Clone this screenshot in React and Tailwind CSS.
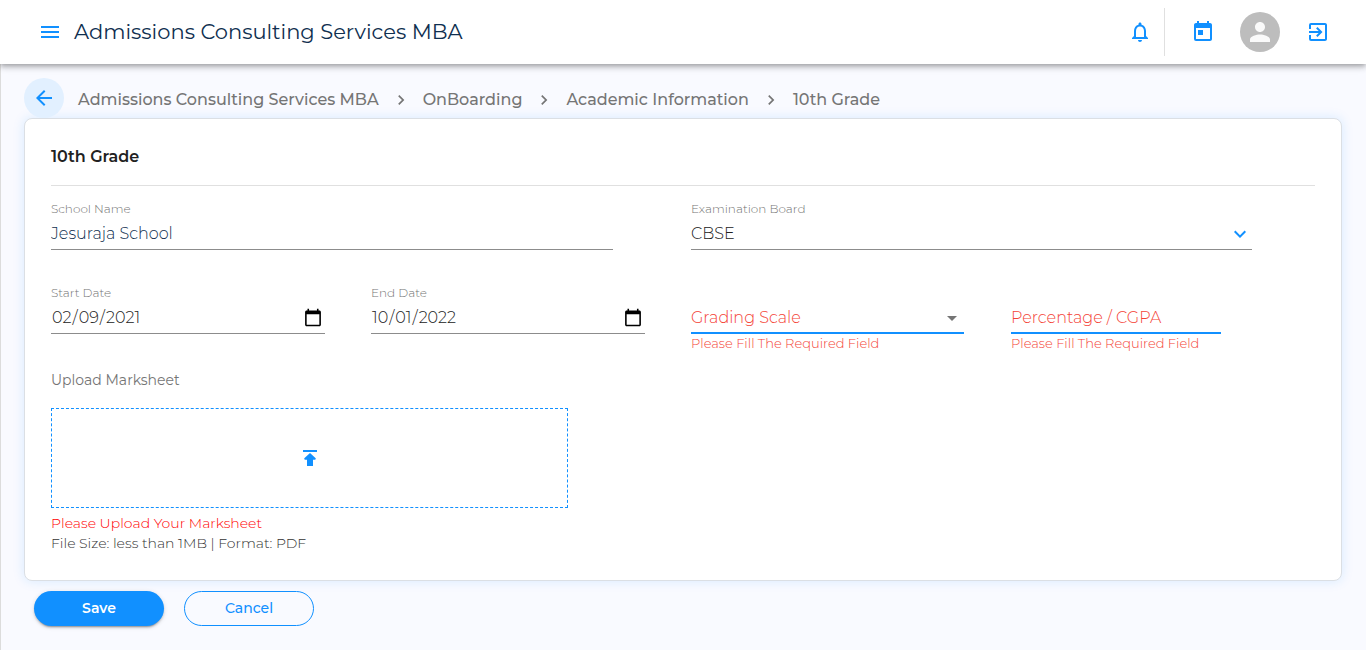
import React from "react";
import {
  MdMenu,
  MdNotificationsNone,
  MdToday,
  MdPerson,
  MdExitToApp,
  MdArrowBack,
  MdNavigateNext,
  MdArrowDropDown,
} from "react-icons/md";

const crumbs = [
  "Admissions Consulting Services MBA",
  "OnBoarding",
  "Academic Information",
  "10th Grade",
];

function Header() {
  return (
    <header className="z-10 flex h-16 items-center bg-white pr-9 pl-[38px] shadow-[0_2px_4px_-1px_rgba(0,0,0,0.2),0_4px_5px_0_rgba(0,0,0,0.14),0_1px_10px_0_rgba(0,0,0,0.12)]">
      <button type="button" aria-label="Open menu" className="text-[#1190ff]">
        <MdMenu size={24} />
      </button>
      <h1 className="ml-3 text-[21px] leading-8 text-[#0f2f50]">
        Admissions Consulting Services MBA
      </h1>
      <div className="ml-auto flex items-center text-[#1190ff]">
        <button type="button" aria-label="Notifications">
          <MdNotificationsNone size={24} />
        </button>
        <span className="mr-[26px] ml-3 h-12 w-px bg-[#e0e0e0]" />
        <button type="button" aria-label="Calendar">
          <MdToday size={24} />
        </button>
        <button
          type="button"
          aria-label="Profile"
          className="ml-[25px] flex size-10 items-center justify-center rounded-full bg-[#bdbdbd] text-[#fafafa]"
        >
          <MdPerson size={30} />
        </button>
        <button type="button" aria-label="Log out" className="ml-[26px]">
          <MdExitToApp size={24} />
        </button>
      </div>
    </header>
  );
}

function Breadcrumbs() {
  return (
    <nav aria-label="Breadcrumb" className="flex items-center">
      <button
        type="button"
        aria-label="Back"
        className="flex size-10 items-center justify-center rounded-full bg-[#e2f0ff] text-[#1190ff]"
      >
        <MdArrowBack size={24} />
      </button>
      <ol className="ml-[14px] flex items-center pt-1 text-base leading-6 font-medium text-[#757575]">
        {crumbs.map((crumb, i) => (
          <li key={crumb} className="flex items-center">
            {i > 0 && <MdNavigateNext size={20} className="mx-3" />}
            <a href="#">{crumb}</a>
          </li>
        ))}
      </ol>
    </nav>
  );
}

const labelClass = "block h-4 text-xs leading-[18px] text-[#757575] font-light";
const controlClass =
  "mt-px block h-[33px] w-full border-b border-[#8c8c8c] bg-transparent text-base font-light outline-none";
const dateClass =
  "pt-0.5 [&::-webkit-calendar-picker-indicator]:box-border [&::-webkit-calendar-picker-indicator]:size-6 [&::-webkit-calendar-picker-indicator]:p-0.5";
const errorLabelClass =
  "self-center pt-0.5 text-base leading-6 font-light text-[#f44336] [grid-area:1/1]";
const errorControlClass =
  "mt-px h-[33px] w-full appearance-none border-b-2 border-[#1190ff] bg-transparent text-base font-light outline-none [grid-area:1/1]";
const errorClass = "mt-px text-[13px] leading-4 text-[#f44336] font-light";

function UploadIcon() {
  return (
    <svg width="24" height="24" viewBox="0 0 24 24" fill="currentColor" aria-hidden="true">
      <path d="M5 4h14v2H5zM12 7l5.7 5.300q.5 1.300-.8 1.400H15V20H9v-6.300H7.100q-1.300-.1-.8-1.400z" />
    </svg>
  );
}

export default function App() {
  return (
    <div className="flex min-h-screen flex-col bg-[#f9faff] font-['Montserrat','Inter',sans-serif] text-[#212121]">
      <Header />
      <main className="flex-1 border-l border-[#dcdcdc] pt-3.5 pr-6 pb-6 pl-[23px]">
        <Breadcrumbs />
        <form>
          <section className="rounded-lg border border-[#dbdfe4] bg-white px-[26px] pt-[26px] pb-[27px] shadow-[0_0_12px_rgba(17,144,255,0.15)]">
            <h2 className="border-b border-[#e0e0e0] pb-4 text-base leading-6 font-semibold">
              10th Grade
            </h2>
            <div className="-mr-4 grid grid-cols-4 pt-[14px]">
              <div className="col-span-2 h-[84px] pr-[78px]">
                <label htmlFor="school" className={labelClass}>School Name</label>
                <input
                  id="school"
                  type="text"
                  defaultValue="Jesuraja School"
                  className={`${controlClass} text-[#0f2f50]`}
                />
              </div>
              <div className="col-span-2 h-[84px] pr-[79px]">
                <label htmlFor="board" className={labelClass}>Examination Board</label>
                <div className="grid">
                  <select
                    id="board"
                    defaultValue="CBSE"
                    className={`${controlClass} appearance-none pt-0.5 [grid-area:1/1]`}
                  >
                    <option>CBSE</option>
                    <option>ICSE</option>
                  </select>
                  <svg
                    width="24"
                    height="24"
                    viewBox="0 0 24 24"
                    fill="#1190ff"
                    className="pointer-events-none mb-1 self-end justify-self-end [grid-area:1/1]"
                    aria-hidden="true"
                  >
                    <path d="M7.41 8.59 12 13.17l4.59-4.58L18 10l-6 6-6-6z" />
                  </svg>
                </div>
              </div>
              <div className="pr-[46px]">
                <label htmlFor="start" className={labelClass}>Start Date</label>
                <input
                  id="start"
                  type="date"
                  defaultValue="2021-02-09"
                  className={`${controlClass} ${dateClass}`}
                />
              </div>
              <div className="pr-[46px]">
                <label htmlFor="end" className={labelClass}>End Date</label>
                <input
                  id="end"
                  type="date"
                  defaultValue="2022-10-01"
                  className={`${controlClass} ${dateClass}`}
                />
              </div>
              <div className="pt-4 pr-[47px]">
                <div className="grid">
                  <label htmlFor="scale" className={errorLabelClass}>Grading Scale</label>
                  <select id="scale" defaultValue="" className={errorControlClass}>
                    <option value=""></option>
                    <option value="percentage">Percentage</option>
                    <option value="cgpa">CGPA</option>
                  </select>
                  <MdArrowDropDown
                    size={24}
                    className="pointer-events-none mb-1 self-end justify-self-end text-[#757575] [grid-area:1/1]"
                  />
                </div>
                <p className={errorClass}>Please Fill The Required Field</p>
              </div>
              <div className="pt-4 pr-[110px]">
                <div className="grid">
                  <label htmlFor="score" className={errorLabelClass}>Percentage / CGPA</label>
                  <input id="score" type="text" className={errorControlClass} />
                </div>
                <p className={errorClass}>Please Fill The Required Field</p>
              </div>
            </div>
            <p className="mt-[19px] text-sm leading-5 text-[#757575]">Upload Marksheet</p>
            <button
              type="button"
              aria-label="Upload Marksheet"
              className="mt-[18px] flex h-[100px] w-[517px] max-w-full items-center justify-center border border-dashed border-[#1190ff] text-[#1190ff]"
            >
              <UploadIcon />
            </button>
            <p className="mt-[5px] text-sm leading-5 font-light text-[#ff0000]">
              Please Upload Your Marksheet
            </p>
            <p className="text-sm leading-5 font-light text-[#333333]">
              File Size: less than 1MB | Format: PDF
            </p>
          </section>
          <div className="mt-2.5 flex gap-5 pl-2.5 text-sm leading-5">
            <button
              type="submit"
              className="h-[35px] w-[130px] rounded-full bg-[#1190ff] pb-0.5 font-semibold text-white shadow-[0_3px_1px_-2px_rgba(0,0,0,0.2),0_2px_2px_0_rgba(0,0,0,0.14),0_1px_5px_0_rgba(0,0,0,0.12)]"
            >
              Save
            </button>
            <button
              type="button"
              className="h-[35px] w-[130px] rounded-full border border-[#1190ff] pb-0.5 font-medium text-[#1190ff]"
            >
              Cancel
            </button>
          </div>
        </form>
      </main>
    </div>
  );
}
